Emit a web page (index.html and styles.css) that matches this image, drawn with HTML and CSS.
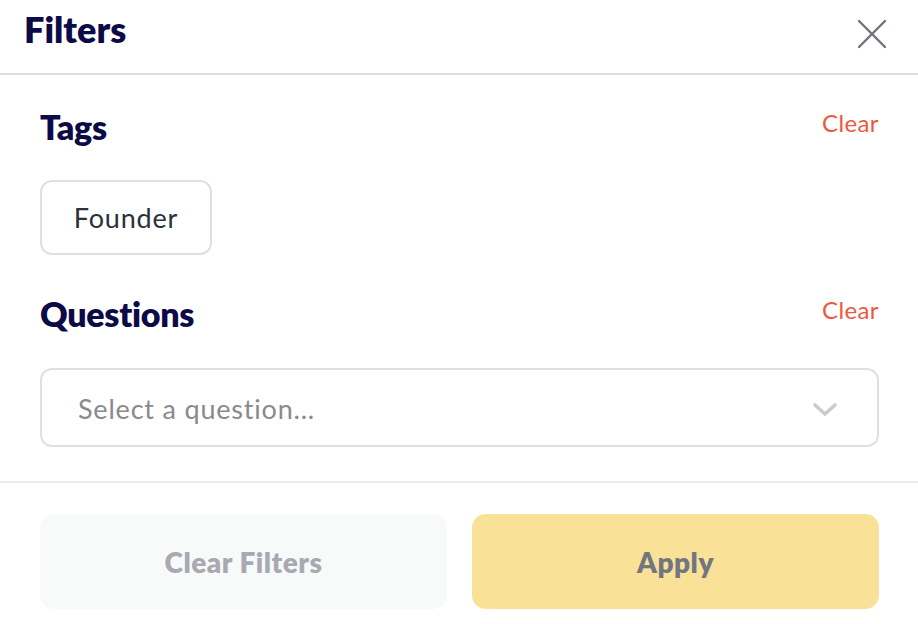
FILE: index.html
```html
<!DOCTYPE html>
<html lang="en">
<head>
<meta charset="utf-8">
<title>Filters</title>
<link rel="stylesheet" href="styles.css">
</head>
<body>
<div class="panel">
  <header class="header">
    <h1 class="title">Filters</h1>
    <button class="close" aria-label="Close">
      <svg width="30" height="30" viewBox="0 0 30 30"><path d="M2 2 L28 28 M28 2 L2 28" stroke="#6f737c" stroke-width="2.4" stroke-linecap="round" fill="none"/></svg>
    </button>
  </header>
  <main class="body">
    <section class="group">
      <div class="group-head">
        <h2 class="heading">Tags</h2>
        <a class="clear">Clear</a>
      </div>
      <div class="chips">
        <span class="chip">Founder</span>
      </div>
    </section>
    <section class="group group-q">
      <div class="group-head">
        <h2 class="heading">Questions</h2>
        <a class="clear">Clear</a>
      </div>
      <div class="select">
        <span class="placeholder">Select a question...</span>
        <svg class="chev" width="26" height="16" viewBox="0 0 26 16"><path d="M3 3 L13 12 L23 3" stroke="#cbcbcb" stroke-width="3.6" stroke-linecap="round" stroke-linejoin="round" fill="none"/></svg>
      </div>
    </section>
  </main>
  <footer class="footer">
    <button class="btn btn-clear">Clear Filters</button>
    <button class="btn btn-apply">Apply</button>
  </footer>
</div>
</body>
</html>
```
FILE: styles.css
```css
* { box-sizing: border-box; }
html, body { margin: 0; padding: 0; background: #fff; }
body { font-family: "Lato", "Noto Sans", sans-serif; color: #0c0b47; }

.header {
  display: flex;
  justify-content: space-between;
  align-items: flex-start;
  height: 75px;
  padding: 8px 31px 0 24px;
  border-bottom: 2px solid #dedee0;
}
.title {
  margin: 0;
  font-size: 36px;
  line-height: 43px;
  font-weight: 800;
  color: #0c0b47;
}
.close {
  margin-top: 11px;
  padding: 0;
  border: 0;
  background: none;
  width: 30px;
  height: 30px;
  display: block;
}
.close svg { display: block; }

.body { padding: 32px 39px 0 40px; }
.group-head {
  display: flex;
  justify-content: space-between;
  align-items: flex-start;
}
.heading {
  margin: 0;
  font-size: 34px;
  line-height: 40px;
  font-weight: 800;
  color: #0c0b47;
  letter-spacing: -0.3px;
}
.clear {
  font-size: 24px;
  line-height: 32px;
  letter-spacing: 0.4px;
  color: #ea5a3d;
  cursor: pointer;
}
.chips { display: flex; margin-top: 33px; }
.chip {
  display: flex;
  align-items: center;
  justify-content: center;
  height: 75px;
  width: 172px;
  border: 2px solid #e0e0e0;
  border-radius: 12px;
  font-size: 27px;
  letter-spacing: 0.8px;
  color: #2b303b;
}
.group-q { margin-top: 39px; }
.select {
  margin-top: 34px;
  height: 79px;
  border: 2px solid #e0e0e0;
  border-radius: 12px;
  display: flex;
  align-items: center;
  justify-content: space-between;
  padding: 0 39px 0 36px;
}
.placeholder { font-size: 27px; letter-spacing: 0.8px; color: #8a8a8c; margin-top: 2px; }
.chev { display: block; margin-top: 4px; }

.footer {
  margin-top: 34px;
  border-top: 2px solid #ececec;
  padding: 31px 39px 0 40px;
  display: grid;
  grid-template-columns: 1fr 1fr;
  gap: 25px;
}
.btn {
  height: 95px;
  border: 0;
  border-radius: 14px;
  font-family: "Lato", "Noto Sans", sans-serif;
  font-size: 28px;
  letter-spacing: 0.5px;
  font-weight: 800;
}
.btn-clear { background: #f8f9f9; color: #a8a9b3; }
.btn-apply { background: #f9e297; color: #72767f; }
```
